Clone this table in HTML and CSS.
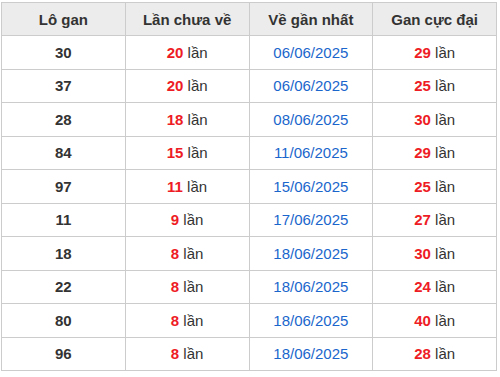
FILE: index.html
```html
<!DOCTYPE html>
<html>
<head>
  <meta charset="utf-8">
  <title>Lô gan</title>
  <link rel="stylesheet" href="styles.css">
</head>
<body>
  <table class="gan-table">
    <thead>
      <tr>
        <th>Lô gan</th>
        <th>Lần chưa về</th>
        <th>Về gần nhất</th>
        <th>Gan cực đại</th>
      </tr>
    </thead>
    <tbody>
      <tr><td class="num">30</td><td><b class="red">20</b> lần</td><td class="date">06/06/2025</td><td><b class="red">29</b> lần</td></tr>
      <tr><td class="num">37</td><td><b class="red">20</b> lần</td><td class="date">06/06/2025</td><td><b class="red">25</b> lần</td></tr>
      <tr><td class="num">28</td><td><b class="red">18</b> lần</td><td class="date">08/06/2025</td><td><b class="red">30</b> lần</td></tr>
      <tr><td class="num">84</td><td><b class="red">15</b> lần</td><td class="date">11/06/2025</td><td><b class="red">29</b> lần</td></tr>
      <tr><td class="num">97</td><td><b class="red">11</b> lần</td><td class="date">15/06/2025</td><td><b class="red">25</b> lần</td></tr>
      <tr><td class="num">11</td><td><b class="red">9</b> lần</td><td class="date">17/06/2025</td><td><b class="red">27</b> lần</td></tr>
      <tr><td class="num">18</td><td><b class="red">8</b> lần</td><td class="date">18/06/2025</td><td><b class="red">30</b> lần</td></tr>
      <tr><td class="num">22</td><td><b class="red">8</b> lần</td><td class="date">18/06/2025</td><td><b class="red">24</b> lần</td></tr>
      <tr><td class="num">80</td><td><b class="red">8</b> lần</td><td class="date">18/06/2025</td><td><b class="red">40</b> lần</td></tr>
      <tr><td class="num">96</td><td><b class="red">8</b> lần</td><td class="date">18/06/2025</td><td><b class="red">28</b> lần</td></tr>
    </tbody>
  </table>
</body>
</html>
```

FILE: styles.css
```css
body {
  margin: 0;
  padding: 2px 0 0 1px;
  font-family: "Liberation Sans", Arial, sans-serif;
  font-size: 15px;
  color: #333;
  background: #fff;
}

.gan-table {
  border-collapse: collapse;
  width: 496px;
  table-layout: fixed;
}

.gan-table th,
.gan-table td {
  border: 1px solid #ccc;
  text-align: center;
  padding: 0;
  height: 32.5px;
}

.gan-table th {
  background: #ececec;
  font-weight: bold;
  height: 32px;
}

.num {
  font-weight: bold;
}

.red {
  color: #ee1c25;
}

.date {
  color: #1a66cc;
}
```
